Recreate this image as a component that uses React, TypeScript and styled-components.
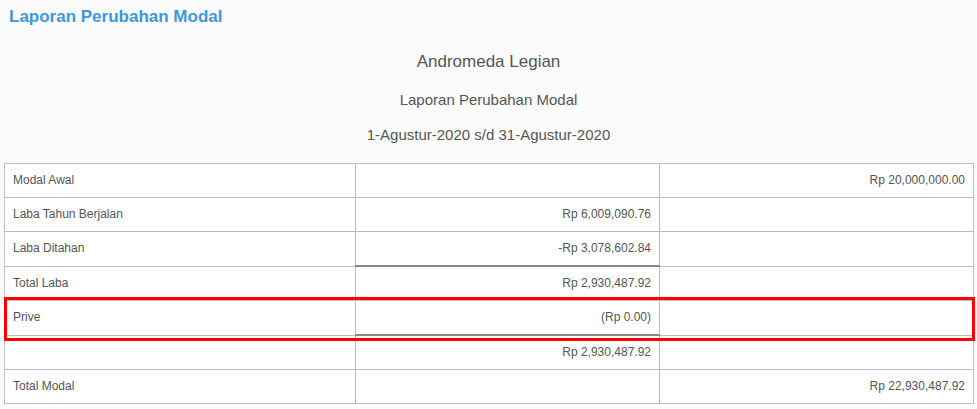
import React from "react";
import styled, { createGlobalStyle } from "styled-components";

const GlobalStyle = createGlobalStyle`
  html, body {
    margin: 0;
    padding: 0;
    background: #fbfbfb;
    font-family: Arial, "Liberation Sans", Helvetica, sans-serif;
    color: #555;
  }
`;

const Page = styled.div`
  width: 977px;
  padding: 0 4px;
  box-sizing: border-box;
`;

const Title = styled.h3`
  margin: 0;
  padding: 7px 0 0 5px;
  height: 36px;
  box-sizing: border-box;
  font-size: 17px;
  line-height: 20px;
  font-weight: bold;
  color: #3b98da;
`;

const Header = styled.div`
  display: flex;
  flex-direction: column;
  align-items: center;
  padding-bottom: 19px;
`;

const Company = styled.div`
  font-size: 17px;
  line-height: 20px;
  margin-top: 16px;
  color: #555;
`;

const SubTitle = styled.div<{ $gap: number }>`
  font-size: 15px;
  line-height: 18px;
  margin-top: ${(p) => p.$gap}px;
  color: #555;
`;

const TableWrap = styled.div`
  position: relative;
`;

const Table = styled.table`
  width: 969px;
  border-collapse: collapse;
  table-layout: fixed;
  background: #fff;
  font-size: 12px;
  line-height: 17px;
  color: #555;
`;

const Cell = styled.td<{ $right?: boolean; $rule?: boolean }>`
  border: 1px solid #b7bec4;
  ${(p) => (p.$rule ? "border-top: 2px solid #888;" : "")}
  padding: 8px;
  height: 17px;
  text-align: ${(p) => (p.$right ? "right" : "left")};
  white-space: nowrap;
`;

const Highlight = styled.div`
  position: absolute;
  left: 0;
  top: 134px;
  width: 971px;
  height: 44px;
  border: 3px solid #ff0000;
  box-sizing: border-box;
  pointer-events: none;
`;

type Row = {
  label: string;
  mid: string;
  right: string;
  rule?: boolean;
};

const rows: Row[] = [
  { label: "Modal Awal", mid: "", right: "Rp 20,000,000.00" },
  { label: "Laba Tahun Berjalan", mid: "Rp 6,009,090.76", right: "" },
  { label: "Laba Ditahan", mid: "-Rp 3,078,602.84", right: "" },
  { label: "Total Laba", mid: "Rp 2,930,487.92", right: "", rule: true },
  { label: "Prive", mid: "(Rp 0.00)", right: "" },
  { label: "", mid: "Rp 2,930,487.92", right: "", rule: true },
  { label: "Total Modal", mid: "", right: "Rp 22,930,487.92" },
];

export default function App() {
  return (
    <>
      <GlobalStyle />
      <Page>
        <Title>Laporan Perubahan Modal</Title>
        <Header>
          <Company>Andromeda Legian</Company>
          <SubTitle $gap={19}>Laporan Perubahan Modal</SubTitle>
          <SubTitle $gap={17}>1-Agustur-2020 s/d 31-Agustur-2020</SubTitle>
        </Header>
        <TableWrap>
          <Table>
            <colgroup>
              <col style={{ width: 351 }} />
              <col style={{ width: 304 }} />
              <col style={{ width: 314 }} />
            </colgroup>
            <tbody>
              {rows.map((r, i) => (
                <tr key={i}>
                  <Cell>{r.label}</Cell>
                  <Cell $right $rule={r.rule}>
                    {r.mid}
                  </Cell>
                  <Cell $right>{r.right}</Cell>
                </tr>
              ))}
            </tbody>
          </Table>
          <Highlight />
        </TableWrap>
      </Page>
    </>
  );
}
